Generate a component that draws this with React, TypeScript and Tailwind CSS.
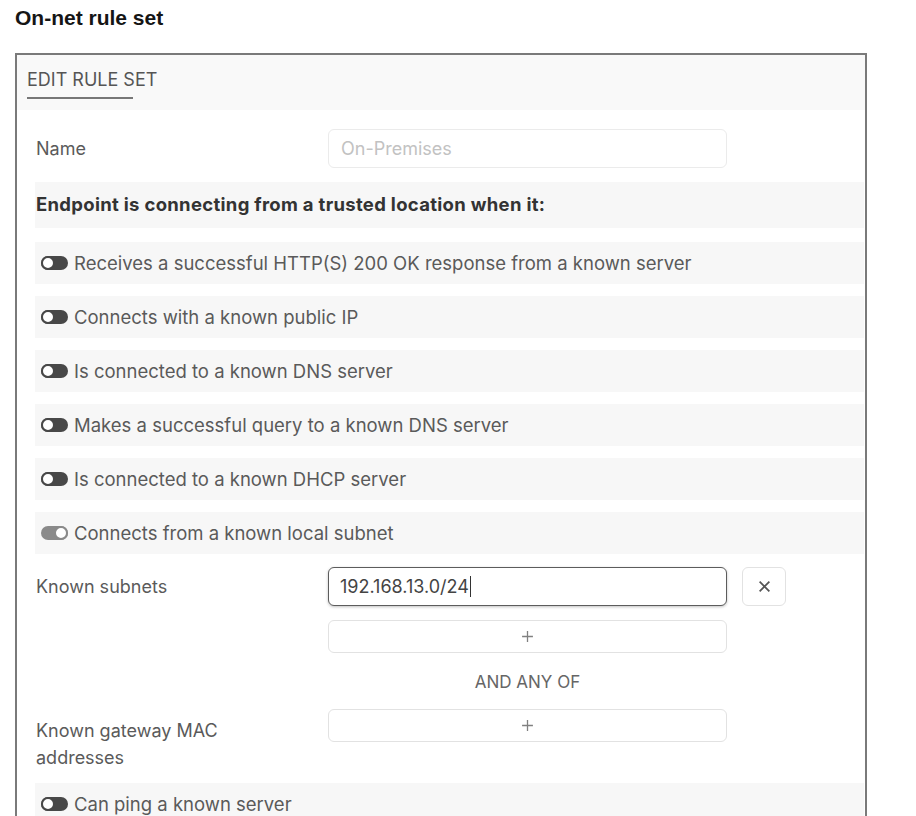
import React from "react";

function Toggle({ on = false }: { on?: boolean }) {
  if (on) {
    return (
      <span className="relative inline-block w-[27px] h-[14px] rounded-full bg-[#8a8a8a] shrink-0">
        <span className="absolute right-0 top-0 w-[14px] h-[14px] rounded-full bg-white border-[2.5px] border-[#8a8a8a]" />
      </span>
    );
  }
  return (
    <span className="relative inline-block w-[27px] h-[14px] rounded-full bg-[#484848] shrink-0">
      <span className="absolute left-0 top-0 w-[14px] h-[14px] rounded-full bg-white border-[2.5px] border-[#484848]" />
    </span>
  );
}

function ToggleRow({ label, on = false, className = "" }: { label: string; on?: boolean; className?: string }) {
  return (
    <div className={`h-[42px] bg-[#f7f7f7] flex items-center pl-[6px] gap-[6px] ${className}`}>
      <Toggle on={on} />
      <span className="text-[18.5px] text-[#5a5a5a] leading-[22px]">{label}</span>
    </div>
  );
}

function PlusBox({ className = "" }: { className?: string }) {
  return (
    <div className={`w-[399px] h-[33px] border border-[#e2e2e2] rounded-[6px] bg-white flex items-center justify-center ${className}`}>
      <svg width="13" height="13" viewBox="0 0 12 12">
        <path d="M6 1v10M1 6h10" stroke="#808080" strokeWidth="1.2" />
      </svg>
    </div>
  );
}

export default function App() {
  const toggles = [
    "Receives a successful HTTP(S) 200 OK response from a known server",
    "Connects with a known public IP",
    "Is connected to a known DNS server",
    "Makes a successful query to a known DNS server",
    "Is connected to a known DHCP server",
  ];
  return (
    <div className="bg-white h-[816px] overflow-hidden pt-[5px]" style={{ fontFamily: "Inter, 'Noto Sans', sans-serif" }}>
      <h1 className="ml-[15px] text-[21px] font-bold leading-[25px] text-[#151515]" style={{ fontFamily: "'Liberation Sans', Arial, sans-serif" }}>
        On-net rule set
      </h1>
      <div className="ml-[15px] mt-[23px] w-[852px] border-2 border-b-0 border-[#7a7a7a] pb-[80px]">
        {/* header */}
        <div className="h-[55px] bg-[#f9f9f9] pl-[10px] pt-[14px]">
          <div className="text-[18px] leading-[22px] text-[#555]">EDIT RULE SET</div>
          <div className="w-[106px] h-[2px] bg-[#777] mt-[6px]" />
        </div>

        <div className="pl-[18px] pr-[1px]">
          {/* Name */}
          <div className="mt-[19px] flex items-center">
            <div className="w-[293px] pl-[1px] text-[18px] text-[#5a5a5a]">Name</div>
            <div className="w-[399px] h-[39px] border border-[#ebebeb] rounded-[6px] flex items-center pl-[12px] text-[18px] text-[#c2c2c2]">
              On-Premises
            </div>
          </div>

          {/* Endpoint heading */}
          <div className="mt-[14px] h-[46px] bg-[#f7f7f7] flex items-center pl-[1px]">
            <span className="text-[18.5px] font-bold tracking-[0.3px] text-[#333]">
              Endpoint is connecting from a trusted location when it:
            </span>
          </div>

          <div className="mt-[14px] flex flex-col gap-[12px]">
            {toggles.map((t) => (
              <ToggleRow key={t} label={t} />
            ))}
            <ToggleRow label="Connects from a known local subnet" on />
          </div>

          {/* Known subnets */}
          <div className="mt-[13px] flex items-start">
            <div className="w-[293px] pl-[1px] h-[39px] flex items-center text-[18px] text-[#5a5a5a]">Known subnets</div>
            <div className="flex flex-col">
              <div className="flex items-center">
                <div className="w-[399px] h-[39px] border-[1.5px] border-[#5c5c5c] rounded-[6px] bg-white shadow-[0_1px_3px_rgba(0,0,0,0.25)] flex items-center pl-[11px] text-[18px] text-[#444]">
                  192.168.13.0/24
                  <span className="inline-block w-[1.5px] h-[21px] bg-[#333] ml-[1px]" />
                </div>
                <div className="ml-[15px] w-[44px] h-[39px] border border-[#e2e2e2] rounded-[6px] bg-white flex items-center justify-center">
                  <svg width="13" height="13" viewBox="0 0 12 12">
                    <path d="M1.5 1.5l9 9M10.5 1.5l-9 9" stroke="#555" strokeWidth="1.6" />
                  </svg>
                </div>
              </div>
              <PlusBox className="mt-[14px]" />
              <div className="w-[399px] mt-[18px] h-[22px] text-center text-[17px] leading-[22px] text-[#666]">AND ANY OF</div>
            </div>
          </div>

          {/* Known gateway MAC addresses */}
          <div className="mt-[16px] flex items-start">
            <div className="w-[293px] pl-[1px] pt-[8px] text-[18px] leading-[27px] text-[#5a5a5a]">
              Known gateway MAC
              <br />
              addresses
            </div>
            <PlusBox />
          </div>

          <ToggleRow label="Can ping a known server" className="mt-[12px]" />
        </div>
      </div>
    </div>
  );
}
